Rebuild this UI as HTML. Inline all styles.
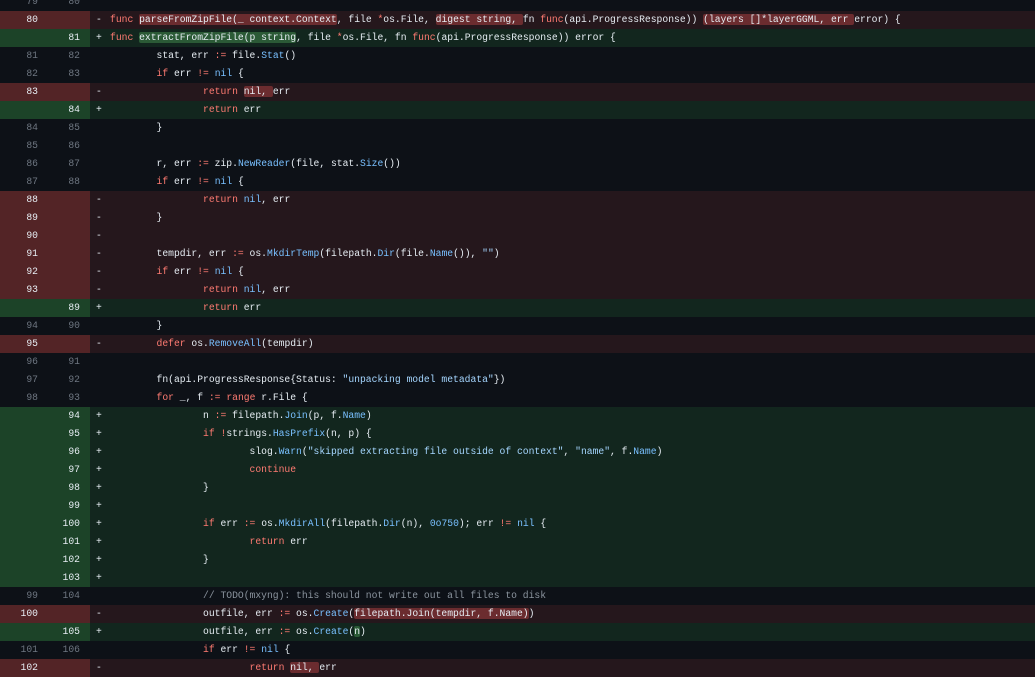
<!DOCTYPE html>
<html><head><meta charset="utf-8"><style>
html,body{margin:0;padding:0;background:#0d1117;width:1035px;height:675px;overflow:hidden}
#w{position:absolute;top:-7px;left:0;width:1035px}
.r{height:18px;display:flex;font:9.7px/18px "Liberation Mono",monospace;color:#e6edf3}
.n{width:38px;text-align:right;color:#6e7681;flex:none}
.n2{width:42px;text-align:right;color:#6e7681;flex:none;padding-right:10px}
.m{width:14px;flex:none;padding-left:6px;color:#e6edf3}
.c{white-space:pre;tab-size:8;-moz-tab-size:8;flex:1}
.d{background:#25171c}.d .n,.d .n2,.d .nb{background:#532426;color:#e6edf3}
.a{background:#12261e}.a .n,.a .n2{background:#1c4328;color:#e6edf3}
.k{color:#ff7b72}.f{color:#79c0ff}.s{color:#a5d6ff}.cm{color:#8b949e}
.hd{background:#6b2c2f;border-radius:2px}.ha{background:#2b5a36;border-radius:2px}
</style></head><body><div id="w">
<div class="r"><span class="n">79</span><span class="n2">80</span><span class="m"></span><span class="c"></span></div>
<div class="r d"><span class="n">80</span><span class="n2"></span><span class="m">-</span><span class="c"><span class="k">func</span> <span class="hd">parseFromZipFile(_ context.Context</span>, file <span class="k">*</span>os.File, <span class="hd">digest string, </span>fn <span class="k">func</span>(api.ProgressResponse)) <span class="hd">(layers []*layerGGML, err </span>error) {</span></div>
<div class="r a"><span class="n"></span><span class="n2">81</span><span class="m">+</span><span class="c"><span class="k">func</span> <span class="ha">extractFromZipFile(p string</span>, file <span class="k">*</span>os.File, fn <span class="k">func</span>(api.ProgressResponse)) error {</span></div>
<div class="r"><span class="n">81</span><span class="n2">82</span><span class="m"></span><span class="c">	stat, err <span class="k">:=</span> file.<span class="f">Stat</span>()</span></div>
<div class="r"><span class="n">82</span><span class="n2">83</span><span class="m"></span><span class="c">	<span class="k">if</span> err <span class="k">!=</span> <span class="f">nil</span> {</span></div>
<div class="r d"><span class="n">83</span><span class="n2"></span><span class="m">-</span><span class="c">		<span class="k">return</span> <span class="hd">nil, </span>err</span></div>
<div class="r a"><span class="n"></span><span class="n2">84</span><span class="m">+</span><span class="c">		<span class="k">return</span> err</span></div>
<div class="r"><span class="n">84</span><span class="n2">85</span><span class="m"></span><span class="c">	}</span></div>
<div class="r"><span class="n">85</span><span class="n2">86</span><span class="m"></span><span class="c"></span></div>
<div class="r"><span class="n">86</span><span class="n2">87</span><span class="m"></span><span class="c">	r, err <span class="k">:=</span> zip.<span class="f">NewReader</span>(file, stat.<span class="f">Size</span>())</span></div>
<div class="r"><span class="n">87</span><span class="n2">88</span><span class="m"></span><span class="c">	<span class="k">if</span> err <span class="k">!=</span> <span class="f">nil</span> {</span></div>
<div class="r d"><span class="n">88</span><span class="n2"></span><span class="m">-</span><span class="c">		<span class="k">return</span> <span class="f">nil</span>, err</span></div>
<div class="r d"><span class="n">89</span><span class="n2"></span><span class="m">-</span><span class="c">	}</span></div>
<div class="r d"><span class="n">90</span><span class="n2"></span><span class="m">-</span><span class="c"></span></div>
<div class="r d"><span class="n">91</span><span class="n2"></span><span class="m">-</span><span class="c">	tempdir, err <span class="k">:=</span> os.<span class="f">MkdirTemp</span>(filepath.<span class="f">Dir</span>(file.<span class="f">Name</span>()), <span class="s">""</span>)</span></div>
<div class="r d"><span class="n">92</span><span class="n2"></span><span class="m">-</span><span class="c">	<span class="k">if</span> err <span class="k">!=</span> <span class="f">nil</span> {</span></div>
<div class="r d"><span class="n">93</span><span class="n2"></span><span class="m">-</span><span class="c">		<span class="k">return</span> <span class="f">nil</span>, err</span></div>
<div class="r a"><span class="n"></span><span class="n2">89</span><span class="m">+</span><span class="c">		<span class="k">return</span> err</span></div>
<div class="r"><span class="n">94</span><span class="n2">90</span><span class="m"></span><span class="c">	}</span></div>
<div class="r d"><span class="n">95</span><span class="n2"></span><span class="m">-</span><span class="c">	<span class="k">defer</span> os.<span class="f">RemoveAll</span>(tempdir)</span></div>
<div class="r"><span class="n">96</span><span class="n2">91</span><span class="m"></span><span class="c"></span></div>
<div class="r"><span class="n">97</span><span class="n2">92</span><span class="m"></span><span class="c">	fn(api.ProgressResponse{Status: <span class="s">"unpacking model metadata"</span>})</span></div>
<div class="r"><span class="n">98</span><span class="n2">93</span><span class="m"></span><span class="c">	<span class="k">for</span> _, f <span class="k">:=</span> <span class="k">range</span> r.File {</span></div>
<div class="r a"><span class="n"></span><span class="n2">94</span><span class="m">+</span><span class="c">		n <span class="k">:=</span> filepath.<span class="f">Join</span>(p, f.<span class="f">Name</span>)</span></div>
<div class="r a"><span class="n"></span><span class="n2">95</span><span class="m">+</span><span class="c">		<span class="k">if</span> <span class="k">!</span>strings.<span class="f">HasPrefix</span>(n, p) {</span></div>
<div class="r a"><span class="n"></span><span class="n2">96</span><span class="m">+</span><span class="c">			slog.<span class="f">Warn</span>(<span class="s">"skipped extracting file outside of context"</span>, <span class="s">"name"</span>, f.<span class="f">Name</span>)</span></div>
<div class="r a"><span class="n"></span><span class="n2">97</span><span class="m">+</span><span class="c">			<span class="k">continue</span></span></div>
<div class="r a"><span class="n"></span><span class="n2">98</span><span class="m">+</span><span class="c">		}</span></div>
<div class="r a"><span class="n"></span><span class="n2">99</span><span class="m">+</span><span class="c"></span></div>
<div class="r a"><span class="n"></span><span class="n2">100</span><span class="m">+</span><span class="c">		<span class="k">if</span> err <span class="k">:=</span> os.<span class="f">MkdirAll</span>(filepath.<span class="f">Dir</span>(n), <span class="f">0o750</span>); err <span class="k">!=</span> <span class="f">nil</span> {</span></div>
<div class="r a"><span class="n"></span><span class="n2">101</span><span class="m">+</span><span class="c">			<span class="k">return</span> err</span></div>
<div class="r a"><span class="n"></span><span class="n2">102</span><span class="m">+</span><span class="c">		}</span></div>
<div class="r a"><span class="n"></span><span class="n2">103</span><span class="m">+</span><span class="c"></span></div>
<div class="r"><span class="n">99</span><span class="n2">104</span><span class="m"></span><span class="c">		<span class="cm">// TODO(mxyng): this should not write out all files to disk</span></span></div>
<div class="r d"><span class="n">100</span><span class="n2"></span><span class="m">-</span><span class="c">		outfile, err <span class="k">:=</span> os.<span class="f">Create</span>(<span class="hd">filepath.Join(tempdir, f.Name)</span>)</span></div>
<div class="r a"><span class="n"></span><span class="n2">105</span><span class="m">+</span><span class="c">		outfile, err <span class="k">:=</span> os.<span class="f">Create</span>(<span class="ha">n</span>)</span></div>
<div class="r"><span class="n">101</span><span class="n2">106</span><span class="m"></span><span class="c">		<span class="k">if</span> err <span class="k">!=</span> <span class="f">nil</span> {</span></div>
<div class="r d"><span class="n">102</span><span class="n2"></span><span class="m">-</span><span class="c">			<span class="k">return</span> <span class="hd">nil, </span>err</span></div>
</div></body></html>
